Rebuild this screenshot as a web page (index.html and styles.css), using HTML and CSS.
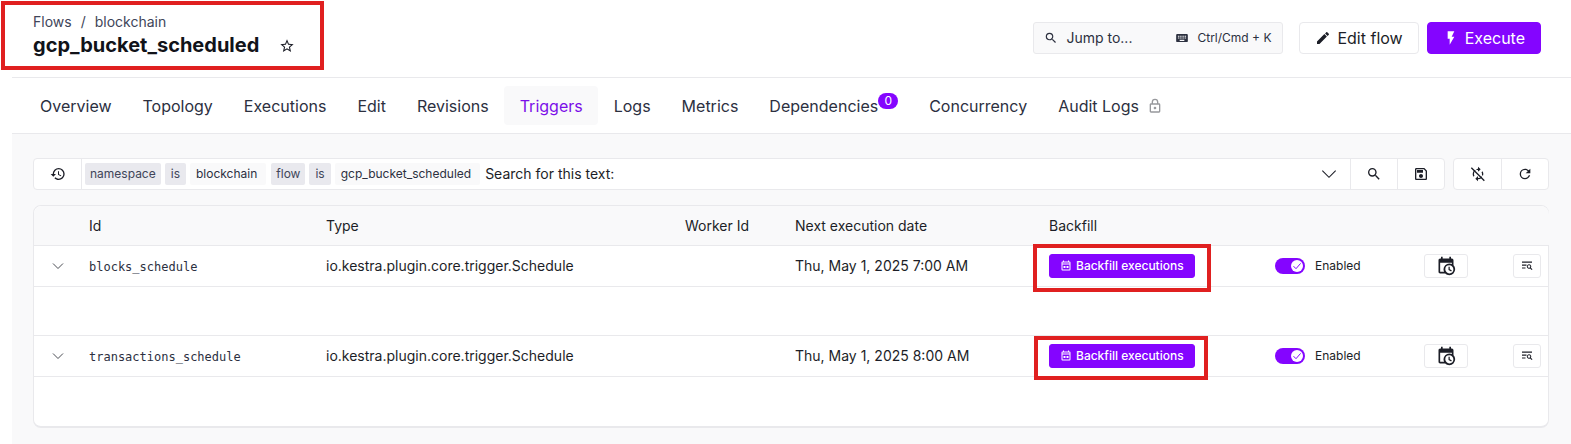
FILE: index.html
```html
<!DOCTYPE html>
<html lang="en">
<head>
<meta charset="utf-8">
<title>gcp_bucket_scheduled</title>
<link rel="stylesheet" href="styles.css">
</head>
<body>
<svg class="sprite" aria-hidden="true">
  <symbol id="i-magnify" viewBox="0 0 24 24"><path d="M9.5,3A6.5,6.5 0 0,1 16,9.5C16,11.11 15.41,12.59 14.44,13.73L14.71,14H15.5L20.5,19L19,20.5L14,15.5V14.71L13.73,14.44C12.59,15.41 11.11,16 9.5,16A6.5,6.5 0 0,1 3,9.5A6.5,6.5 0 0,1 9.5,3M9.5,5C7,5 5,7 5,9.5C5,12 7,14 9.5,14C12,14 14,12 14,9.5C14,7 12,5 9.5,5Z"/></symbol>
  <symbol id="i-pencil" viewBox="0 0 24 24"><path d="M20.71,7.04C21.1,6.65 21.1,6 20.71,5.63L18.37,3.29C18,2.9 17.35,2.9 16.96,3.29L15.12,5.12L18.87,8.87M3,17.25V21H6.75L17.81,9.93L14.06,6.18L3,17.25Z"/></symbol>
  <symbol id="i-flash" viewBox="0 0 24 24"><path d="M7,2V13H10V22L17,10H13L17,2H7Z"/></symbol>
  <symbol id="i-keyboard" viewBox="0 0 24 24"><path d="M19,10H17V8H19M19,13H17V11H19M16,10H14V8H16M16,13H14V11H16M16,17H8V15H16M7,10H5V8H7M7,13H5V11H7M8,11H10V13H8M8,8H10V10H8M11,11H13V13H11M11,8H13V10H11M20,5H4C2.89,5 2,5.89 2,7V17A2,2 0 0,0 4,19H20A2,2 0 0,0 22,17V7C22,5.89 21.1,5 20,5Z"/></symbol>
  <symbol id="i-star" viewBox="0 0 24 24"><path d="M12,15.39L8.24,17.66L9.23,13.38L5.91,10.5L10.29,10.13L12,6.09L13.71,10.13L18.09,10.5L14.77,13.38L15.76,17.66M22,9.24L14.81,8.63L12,2L9.19,8.63L2,9.24L7.45,13.97L5.82,21L12,17.27L18.18,21L16.54,13.97L22,9.24Z"/></symbol>
  <symbol id="i-history" viewBox="0 0 24 24"><path d="M13.5,8H12V13L16.28,15.54L17,14.33L13.5,12.25V8M13,3A9,9 0 0,0 4,12H1L4.96,16.03L9,12H6A7,7 0 0,1 13,5A7,7 0 0,1 20,12A7,7 0 0,1 13,19C11.07,19 9.32,18.21 8.06,16.94L6.64,18.36C8.27,20 10.5,21 13,21A9,9 0 0,0 22,12A9,9 0 0,0 13,3"/></symbol>
  <symbol id="i-save" viewBox="0 0 24 24"><path d="M17 3H5C3.89 3 3 3.9 3 5V19C3 20.1 3.89 21 5 21H19C20.1 21 21 20.1 21 19V7L17 3M19 19H5V5H16.17L19 7.83V19M12 12C10.34 12 9 13.34 9 15S10.34 18 12 18 15 16.66 15 15 13.66 12 12 12M6 6H15V10H6V6Z"/></symbol>
  <symbol id="i-refresh" viewBox="0 0 24 24"><path d="M17.65,6.35C16.2,4.9 14.21,4 12,4A8,8 0 0,0 4,12A8,8 0 0,0 12,20C15.73,20 18.84,17.45 19.73,14H17.65C16.83,16.33 14.61,18 12,18A6,6 0 0,1 6,12A6,6 0 0,1 12,6C13.66,6 15.14,6.69 16.22,7.78L13,11H20V4L17.65,6.35Z"/></symbol>
  <symbol id="i-sync-off" viewBox="0 0 24 24"><path d="M12,6V9L16,5L12,1V4A8,8 0 0,0 4,12C4,13.57 4.46,15.03 5.24,16.26L6.7,14.8C6.25,13.97 6,13 6,12A6,6 0 0,1 12,6M18.76,7.74L17.3,9.2C17.74,10.04 18,11 18,12A6,6 0 0,1 12,18V15L8,19L12,23V20A8,8 0 0,0 20,12C20,10.43 19.54,8.97 18.76,7.74Z"/><path d="M4,1L23,20" stroke="#fff" stroke-width="2"/><path d="M2,2.5L21.5,22" stroke="currentColor" stroke-width="2"/></symbol>
  <symbol id="i-lock" viewBox="0 0 24 24"><path d="M12,17C10.89,17 10,16.1 10,15C10,13.89 10.89,13 12,13A2,2 0 0,1 14,15A2,2 0 0,1 12,17M18,20V10H6V20H18M18,8A2,2 0 0,1 20,10V20A2,2 0 0,1 18,22H6C4.89,22 4,21.1 4,20V10C4,8.89 4.89,8 6,8H7V6A5,5 0 0,1 12,1A5,5 0 0,1 17,6V8H18M12,3A3,3 0 0,0 9,6V8H15V6A3,3 0 0,0 12,3Z"/></symbol>
  <symbol id="i-calendar-clock" viewBox="0 0 24 24"><path d="M15,13H16.5V15.82L18.94,17.23L18.19,18.53L15,16.69V13M19,8H5V19H9.67C9.24,18.09 9,17.07 9,16A7,7 0 0,1 16,9C17.07,9 18.09,9.24 19,9.67V8M5,21C3.89,21 3,20.1 3,19V5C3,3.89 3.89,3 5,3H6V1H8V3H16V1H18V3H19A2,2 0 0,1 21,5V11.1C22.24,12.36 23,14.09 23,16A7,7 0 0,1 16,23C14.09,23 12.36,22.24 11.1,21H5M16,11.15A4.85,4.85 0 0,0 11.15,16C11.15,18.68 13.32,20.85 16,20.85A4.85,4.85 0 0,0 20.85,16C20.85,13.32 18.68,11.15 16,11.15Z"/></symbol>
  <symbol id="i-calendar" viewBox="0 0 24 24"><path d="M19,3H18V1H16V3H8V1H6V3H5A2,2 0 0,0 3,5V19A2,2 0 0,0 5,21H19A2,2 0 0,0 21,19V5A2,2 0 0,0 19,3M19,19H5V9H19V19M5,7V5H19V7H5M7,12H11V16H7V12M13,12H17V16H13V12Z"/></symbol>
  <symbol id="i-text-search" viewBox="0 0 24 24"><path d="M2,3H22V5.5H2ZM2,9H11V11.5H2ZM2,15H9V17H2ZM16,8.5A4.5,4.5 0 0,1 19.8,15.4L23,18.6L21.4,20.2L18.2,17A4.5,4.5 0 1,1 16,8.5M16,10.5A2.5,2.5 0 1,0 16,15.5A2.5,2.5 0 0,0 16,10.5Z"/></symbol>
  <symbol id="i-chevron" viewBox="0 0 24 24"><path d="M2,7L12,17L22,7" fill="none" stroke="currentColor" stroke-width="1.6"/></symbol>
</svg>

<div class="app">
  <header class="topbar">
    <div class="heading">
      <nav class="crumbs" aria-label="Breadcrumb"><a href="#">Flows</a><span>/</span><a href="#">blockchain</a></nav>
      <div class="title-row">
        <h1>gcp_bucket_scheduled</h1>
        <button class="bare" aria-label="Star this flow"><svg class="icon s16"><use href="#i-star"/></svg></button>
      </div>
      <div class="mark mark-title"></div>
    </div>
    <div class="actions">
      <button class="jump"><svg class="icon s14"><use href="#i-magnify"/></svg><span class="jump-label">Jump to...</span><svg class="icon s14"><use href="#i-keyboard"/></svg><span class="keys">Ctrl/Cmd + K</span></button>
      <button class="btn"><svg class="icon s16"><use href="#i-pencil"/></svg>Edit flow</button>
      <button class="btn primary"><svg class="icon s16"><use href="#i-flash"/></svg>Execute</button>
    </div>
  </header>

  <nav class="tabs" aria-label="Flow sections">
    <a href="#">Overview</a>
    <a href="#">Topology</a>
    <a href="#">Executions</a>
    <a href="#">Edit</a>
    <a href="#">Revisions</a>
    <a href="#" class="active" aria-current="page">Triggers</a>
    <a href="#">Logs</a>
    <a href="#">Metrics</a>
    <a href="#">Dependencies<span class="badge">0</span></a>
    <a href="#">Concurrency</a>
    <a href="#">Audit Logs<svg class="icon s16 lock"><use href="#i-lock"/></svg></a>
  </nav>

  <main>
    <div class="filters">
      <div class="group search">
        <button class="cell" aria-label="Search history"><svg class="icon s16"><use href="#i-history"/></svg></button>
        <div class="query">
          <div class="chips"><span class="chip key">namespace</span><span class="chip op">is</span><span class="chip value">blockchain</span></div>
          <div class="chips"><span class="chip key">flow</span><span class="chip op">is</span><span class="chip value">gcp_bucket_scheduled</span></div>
          <input type="text" value="Search for this text:" aria-label="Search triggers">
          <svg class="icon s16"><use href="#i-chevron"/></svg>
        </div>
        <button class="cell" aria-label="Search"><svg class="icon s16"><use href="#i-magnify"/></svg></button>
        <button class="cell" aria-label="Save search"><svg class="icon s16"><use href="#i-save"/></svg></button>
      </div>
      <div class="group">
        <button class="cell" aria-label="Toggle auto refresh"><svg class="icon s16"><use href="#i-sync-off"/></svg></button>
        <button class="cell" aria-label="Refresh"><svg class="icon s16"><use href="#i-refresh"/></svg></button>
      </div>
    </div>

    <div class="card">
      <table>
        <colgroup><col class="c-expand"><col class="c-id"><col class="c-type"><col class="c-worker"><col class="c-date"><col class="c-backfill"><col class="c-state"><col class="c-run"><col class="c-logs"></colgroup>
        <thead>
          <tr><th></th><th>Id</th><th>Type</th><th>Worker Id</th><th>Next execution date</th><th>Backfill</th><th></th><th></th><th></th></tr>
        </thead>
        <tbody>
          <tr>
            <td class="expand"><button class="bare" aria-label="Collapse row"><svg class="icon s12"><use href="#i-chevron"/></svg></button></td>
            <td><code>blocks_schedule</code></td>
            <td>io.kestra.plugin.core.trigger.Schedule</td>
            <td></td>
            <td>Thu, May 1, 2025 7:00 AM</td>
            <td class="marked"><button class="small primary"><svg class="icon s12"><use href="#i-calendar"/></svg>Backfill executions</button><div class="mark mark-first"></div></td>
            <td><label class="toggle"><input type="checkbox" checked><span class="track"><svg viewBox="0 0 12 12"><circle cx="6" cy="6" r="6"/><path d="M2.5 6.2L5 8.7L9.6 3.4"/></svg></span>Enabled</label></td>
            <td><button class="small run" aria-label="Schedule"><svg class="icon s20"><use href="#i-calendar-clock"/></svg></button></td>
            <td><button class="small logs" aria-label="Logs"><svg class="icon s12"><use href="#i-text-search"/></svg></button></td>
          </tr>
          <tr class="detail"><td colspan="9"></td></tr>
          <tr>
            <td class="expand"><button class="bare" aria-label="Collapse row"><svg class="icon s12"><use href="#i-chevron"/></svg></button></td>
            <td><code>transactions_schedule</code></td>
            <td>io.kestra.plugin.core.trigger.Schedule</td>
            <td></td>
            <td>Thu, May 1, 2025 8:00 AM</td>
            <td class="marked"><button class="small primary"><svg class="icon s12"><use href="#i-calendar"/></svg>Backfill executions</button><div class="mark mark-second"></div></td>
            <td><label class="toggle"><input type="checkbox" checked><span class="track"><svg viewBox="0 0 12 12"><circle cx="6" cy="6" r="6"/><path d="M2.5 6.2L5 8.7L9.6 3.4"/></svg></span>Enabled</label></td>
            <td><button class="small run" aria-label="Schedule"><svg class="icon s20"><use href="#i-calendar-clock"/></svg></button></td>
            <td><button class="small logs" aria-label="Logs"><svg class="icon s12"><use href="#i-text-search"/></svg></button></td>
          </tr>
          <tr class="detail"><td colspan="9"></td></tr>
        </tbody>
      </table>
    </div>
  </main>
</div>
</body>
</html>
```
FILE: styles.css
```css
* { box-sizing: border-box; }

body {
  margin: 0;
  background: #fff;
  color: #1c1e27;
  font-family: Inter, "Liberation Sans", sans-serif;
  font-size: 14px;
  line-height: 20px;
}

button, input { font: inherit; color: inherit; }
button { cursor: pointer; }
a { color: inherit; text-decoration: none; }

.sprite { display: none; }
.icon { display: block; flex: none; fill: currentColor; }
.s12 { width: 12px; height: 12px; }
.s14 { width: 14px; height: 14px; }
.s16 { width: 16px; height: 16px; }
.s20 { width: 20px; height: 20px; }

.app {
  display: flex;
  flex-direction: column;
  min-height: 100vh;
  padding-left: 12px;
}

.topbar {
  display: flex;
  align-items: center;
  justify-content: space-between;
  padding: 12px 30px 18px 21px;
  border-bottom: 1px solid #e9e9ec;
}

.heading { position: relative; }
.crumbs { display: flex; gap: 9px; color: #404559; }

.title-row { display: flex; align-items: center; gap: 20px; }
h1 { margin: 0; font-size: 20px; line-height: 27px; font-weight: 700; color: #111319; }

.bare { display: flex; padding: 0; border: 0; background: none; }

.actions { display: flex; align-items: center; gap: 8px; padding-top: 4px; }

.jump {
  display: flex;
  align-items: center;
  gap: 8px;
  width: 250px;
  height: 32px;
  margin-right: 8px;
  padding: 0 11px 0 10px;
  border: 1px solid #e9e9ec;
  border-radius: 3px;
  background: #f9f9fa;
  color: #2c303f;
}
.jump-label { flex: 1; text-align: left; }
.keys { font-size: 12px; }

.btn {
  display: flex;
  align-items: center;
  gap: 6px;
  height: 32px;
  padding: 0 15px;
  border: 1px solid #e9e9ec;
  border-radius: 4px;
  background: #fff;
  font-size: 16px;
}
.primary { border-color: #8405ff; background: #8405ff; color: #fff; }

.tabs { display: flex; padding: 8px 12px; border-bottom: 1px solid #e9e9ec; }
.tabs a {
  display: flex;
  align-items: center;
  height: 39px;
  padding: 0 15px 0 16px;
  border-radius: 4px;
  font-size: 16px;
  color: #2c303f;
}
.tabs .active { background: #f9f9fa; color: #7b0fe8; }
.badge {
  align-self: flex-start;
  min-width: 20px;
  margin-top: 7px;
  border-radius: 8px;
  background: #8405ff;
  color: #fff;
  font-size: 12px;
  line-height: 16px;
  text-align: center;
}
.lock { margin-left: 8px; color: #97989c; }

main { flex: 1; padding: 24px 22px 16px 21px; background: #f9f9fa; }

.filters { display: flex; gap: 8px; margin-bottom: 15px; }
.group {
  display: flex;
  height: 32px;
  border: 1px solid #e9e9ec;
  border-radius: 4px;
  background: #fff;
}
.search { flex: 1; min-width: 0; }
.cell {
  display: flex;
  align-items: center;
  justify-content: center;
  width: 47px;
  padding: 0;
  border: 0;
  background: none;
}
.cell + .cell, .query, .query + .cell { border-left: 1px solid #e9e9ec; }
.query {
  display: flex;
  flex: 1;
  align-items: center;
  gap: 5px;
  min-width: 0;
  padding: 0 13px 0 3px;
}
.query input { flex: 1; min-width: 0; padding: 0; border: 0; outline: 0; background: none; }
.chips { display: flex; gap: 4px; }
.chip { padding: 0 6px; border-radius: 2px; background: #e9e9ee; font-size: 12px; line-height: 22px; color: #404559; }
.chip.key { padding: 0 5px; }
.chip.value { padding-right: 9px; background: #f9f9fa; color: #2c303f; }

.card {
  border: 1px solid #e9e9ec;
  border-bottom-width: 2px;
  border-radius: 8px;
  background: #fff;
}

table { width: 100%; table-layout: fixed; border-collapse: separate; border-spacing: 0; }
.c-expand { width: 47px; }
.c-id { width: 237px; }
.c-type { width: 359px; }
.c-worker { width: 110px; }
.c-date { width: 254px; }
.c-backfill { width: 226px; }
.c-state { width: 149px; }
.c-run { width: 89px; }
.c-logs { width: 44px; }

th, td { height: 41px; padding: 0 8px; border-bottom: 1px solid #e9e9ec; text-align: left; font-weight: 400; white-space: nowrap; }
th { height: 40px; background: #f9f9fa; }
th:first-child { border-top-left-radius: 8px; }
th:last-child { border-top-right-radius: 8px; }
.detail td { height: 49px; }
.detail:last-child td { border-bottom: 0; }
.expand .bare { margin: 0 auto; }
code { font-family: "DejaVu Sans Mono", "Liberation Mono", monospace; font-size: 12px; color: #2c303f; }

.small {
  display: flex;
  align-items: center;
  justify-content: center;
  gap: 4px;
  height: 24px;
  padding: 0 10px;
  border: 1px solid #e9e9ec;
  border-radius: 3px;
  background: #fff;
  font-size: 12px;
}
.small.primary { border-color: #8405ff; background: #8405ff; font-weight: 500; }
.run { width: 44px; }
.logs { width: 28px; padding: 0; }

.toggle { display: flex; align-items: center; gap: 10px; font-size: 12px; }
.toggle input { position: absolute; opacity: 0; }
.track { display: flex; justify-content: flex-end; width: 30px; padding: 2px; border-radius: 8px; background: #8405ff; }
.track svg { width: 12px; height: 12px; fill: #fff; }
.track path { fill: none; stroke: #8405ff; }

/* Highlight frames drawn over the page */
.marked { position: relative; }
.mark { position: absolute; border: 4px solid #e02020; pointer-events: none; }
.mark-title { top: -11px; left: -32px; width: 323px; height: 69px; }
.mark-first { top: -2px; left: -8px; width: 178px; height: 48px; }
.mark-second { top: 0; left: -7px; width: 174px; height: 44px; }
```
